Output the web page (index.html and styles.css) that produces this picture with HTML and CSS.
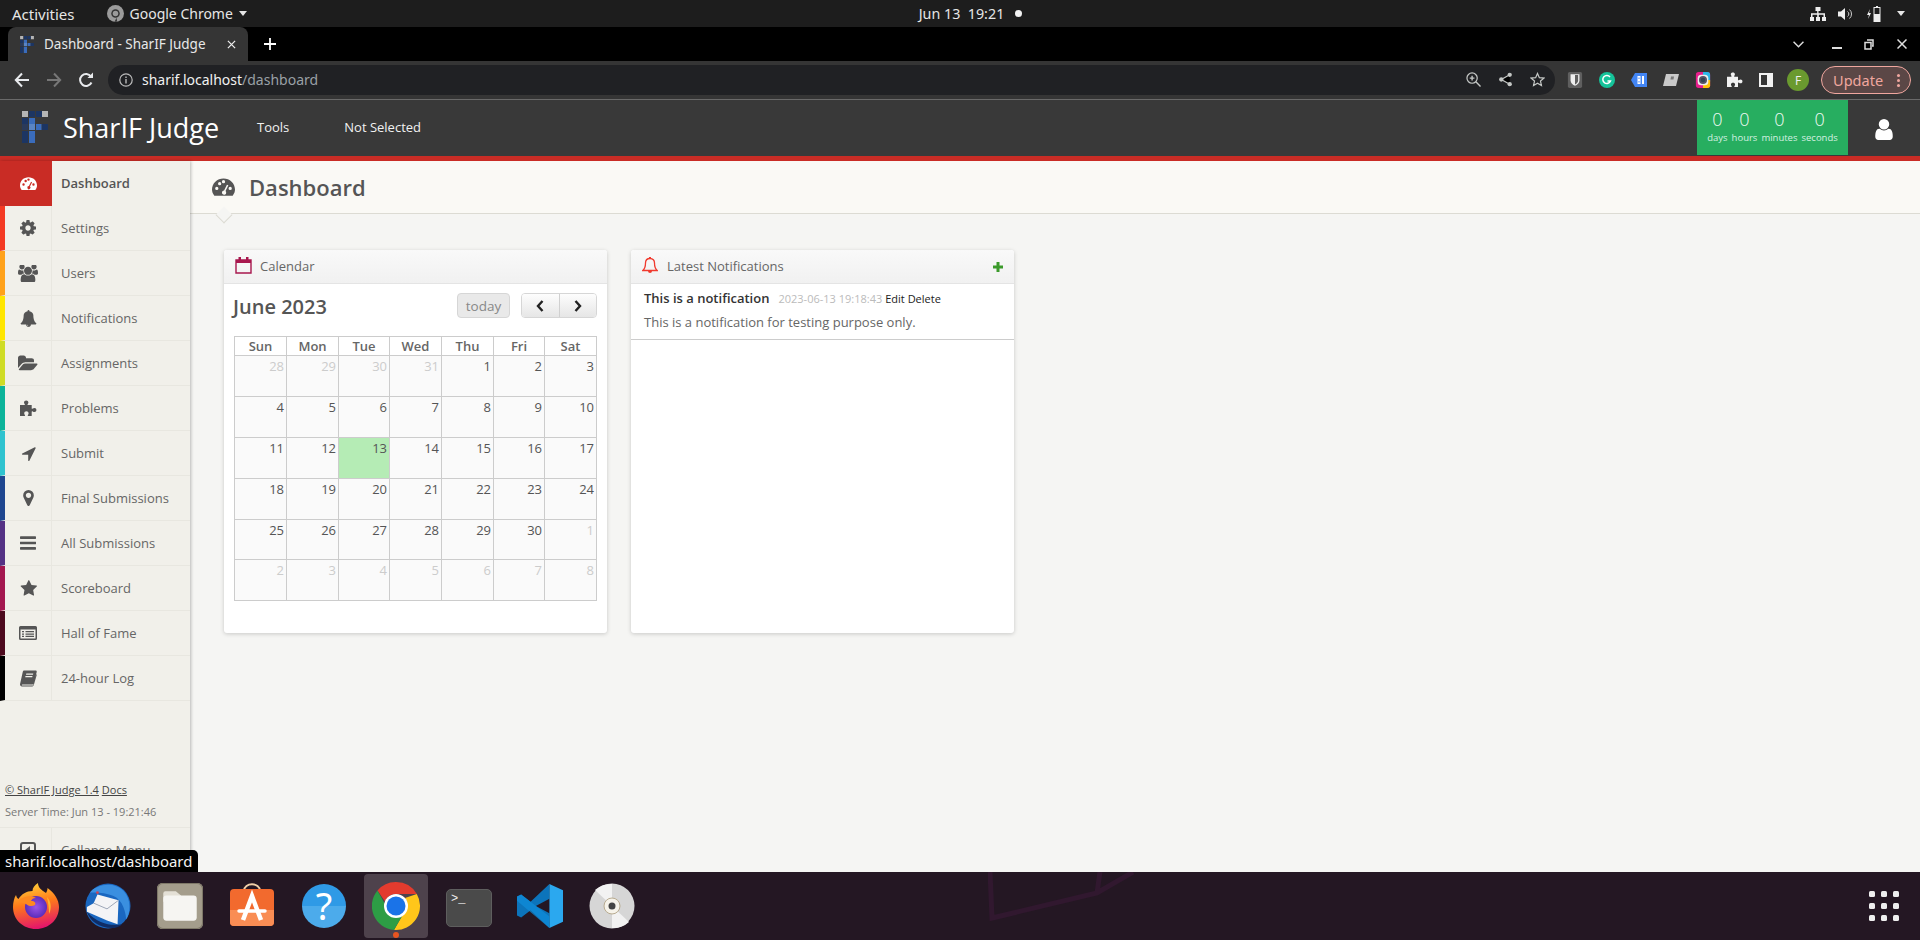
FILE: index.html
```html
<!DOCTYPE html>
<html lang="en">
<head>
<meta charset="utf-8">
<title>Dashboard - SharIF Judge</title>
<link rel="stylesheet" href="styles.css">
</head>
<body>
<svg class="defs" width="0" height="0" aria-hidden="true">
  <symbol id="i-dash" viewBox="0 0 24 18"><path fill="currentColor" fill-rule="evenodd" d="M2.4 18C.8 16 0 14 0 11.7 0 5 5.4 0 12 0s12 5 12 11.7c0 2.300-.8 4.300-2.400 6.300zM3.300 10.500a1.700 1.700 0 1 0 3.400 0 1.700 1.700 0 1 0-3.400 0zM6.300 5.500a1.700 1.700 0 1 0 3.400 0 1.700 1.700 0 1 0-3.400 0zM10.300 3.500a1.700 1.700 0 1 0 3.400 0 1.700 1.700 0 1 0-3.400 0zM17.300 10.500a1.700 1.700 0 1 0 3.400 0 1.700 1.700 0 1 0-3.400 0zM15.600 6.700l-3 6a2.200 2.200 0 1 0 1.500.6l3-6.100z"/></symbol>
  <symbol id="i-cog" viewBox="128 128 1536 1536"><path fill="currentColor" d="M1152 896q0-106-75-181t-181-75-181 75-75 181 75 181 181 75 181-75 75-181zm512-109v222q0 12-8 23t-20 13l-185 28q-19 54-39 91 35 50 107 138 10 12 10 25t-9 23q-27 37-99 108t-94 71q-12 0-26-9l-138-108q-44 23-91 38-16 136-29 186-7 28-36 28h-222q-14 0-24.500-8.500t-11.500-21.500l-28-184q-49-16-90-37l-141 107q-10 9-25 9-14 0-25-11-126-114-165-168-7-10-7-23 0-12 8-23 15-21 51-66.500t54-70.500q-27-50-41-99l-183-27q-13-2-21-12.500t-8-23.500v-222q0-12 8-23t19-13l186-28q14-46 39-92-40-57-107-138-10-12-10-24 0-10 9-23 26-36 98.500-107.500t94.500-71.500q13 0 26 10l138 107q44-23 91-38 16-136 29-186 7-28 36-28h222q14 0 24.500 8.500t11.500 21.500l28 184q49 16 90 37l142-107q9-9 24-9 13 0 25 10 129 119 165 170 7 8 7 22 0 12-8 23-15 21-51 66.500t-54 70.500q26 50 41 98l183 28q13 2 21 12.500t8 23.500z"/></symbol>
  <symbol id="i-users" viewBox="0 128 1920 1536"><path fill="currentColor" d="M593 896q-162 5-265 128h-134q-82 0-138-40.500t-56-118.500q0-353 124-353 6 0 43.500 21t97.500 42.500 119 21.500q67 0 133-23-5 37-5 66 0 139 81 256zm1071 637q0 120-73 189.500t-194 69.500h-874q-121 0-194-69.500t-73-189.500q0-53 3.500-103.500t14-109 26.500-108.500 43-97.500 62-81 85.500-53.500 111.500-20q10 0 43 21.500t73 48 107 48 135 21.500 135-21.500 107-48 73-48 43-21.500q61 0 111.500 20t85.500 53.500 62 81 43 97.500 26.500 108.500 14 109 3.500 103.500zm-1024-1277q0 106-75 181t-181 75-181-75-75-181 75-181 181-75 181 75 75 181zm704 384q0 159-112.500 271.500t-271.500 112.500-271.500-112.500-112.500-271.500 112.500-271.500 271.500-112.500 271.500 112.500 112.500 271.500zm576 225q0 78-56 118.500t-138 40.500h-134q-103-123-265-128 81-117 81-256 0-29-5-66 66 23 133 23 59 0 119-21.500t97.500-42.500 43.500-21q124 0 124 353zm-128-609q0 106-75 181t-181 75-181-75-75-181 75-181 181-75 181 75 75 181z"/></symbol>
  <symbol id="i-bell" viewBox="0 0 1792 1792"><path fill="currentColor" d="M912 1696q0-16-16-16-59 0-101.500-42.500t-42.500-101.500q0-16-16-16t-16 16q0 73 51.500 124.500t124.500 51.500q16 0 16-16zm816-288q0 52-38 90t-90 38h-448q0 106-75 181t-181 75-181-75-75-181h-448q-52 0-90-38t-38-90q50-42 91-88t85-119.500 74.500-158.500 50-206 19.500-260q0-152 117-282.500t307-158.500q-8-19-8-39 0-40 28-68t68-28 68 28 28 68q0 20-8 39 190 28 307 158.500t117 282.500q0 139 19.500 260t50 206 74.500 158.500 85 119.500 91 88z"/></symbol>
  <symbol id="i-folder" viewBox="0 128 1920 1536"><path fill="currentColor" d="M1879 952q0 31-31 66l-336 396q-43 51-120.500 86.500t-143.500 35.500h-1088q-34 0-60.500-13t-26.500-43q0-31 31-66l336-396q43-51 120.500-86.500t143.500-35.500h1088q34 0 60.500 13t26.500 43zm-343-344v160h-832q-94 0-197 47.500t-164 119.500l-337 396-5 6q0-4-.5-12.500t-.5-12.500v-960q0-92 66-158t158-66h320q92 0 158 66t66 158v32h544q92 0 158 66t66 158z"/></symbol>
  <symbol id="i-puzzle" viewBox="0 0 17 17"><path fill="currentColor" d="M0 5h4.300c.7 0 .7-.6.300-1C4.200 3.500 4 3 4 2.500 4 1.200 5 .5 6.200.5s2.200.7 2.200 2c0 .5-.2 1-.6 1.500-.4.400-.4 1 .3 1h3.600v3.300c0 .7.600.7 1.100.3.500-.4 1-.6 1.600-.6 1.300 0 2 .8 2 2s-.7 2-2 2c-.6 0-1.100-.2-1.600-.6-.5-.4-1.100-.4-1.100.3V16H8.300c-.7 0-.7-.6-.3-1.100.4-.5.600-1 .6-1.600 0-1.300-1-2-2.200-2s-2.200.7-2.200 2c0 .6.200 1.100.6 1.600.4.500.4 1.100-.3 1.100H0z"/></symbol>
  <symbol id="i-arrow" viewBox="128 128 1472 1536"><path fill="currentColor" d="M1593 349l-640 1280q-17 35-57 35-5 0-15-2-22-5-35.500-22.500t-13.500-39.500v-576h-576q-22 0-39.500-13.500t-22.500-35.500 4-42 29-30l1280-640q13-7 29-7 27 0 45 19 15 14 18.500 34.500t-6.500 39.500z"/></symbol>
  <symbol id="i-marker" viewBox="0 128 1024 1536"><path fill="currentColor" d="M768 640q0-106-75-181t-181-75-181 75-75 181 75 181 181 75 181-75 75-181zm256 0q0 109-33 179l-364 774q-16 33-47.500 52t-67.500 19-67.500-19-46.500-52l-365-774q-33-70-33-179 0-212 150-362t362-150 362 150 150 362z"/></symbol>
  <symbol id="i-bars" viewBox="128 256 1536 1280"><path fill="currentColor" d="M1664 1344v128q0 26-19 45t-45 19h-1408q-26 0-45-19t-19-45v-128q0-26 19-45t45-19h1408q26 0 45 19t19 45zm0-512v128q0 26-19 45t-45 19h-1408q-26 0-45-19t-19-45v-128q0-26 19-45t45-19h1408q26 0 45 19t19 45zm0-512v128q0 26-19 45t-45 19h-1408q-26 0-45-19t-19-45v-128q0-26 19-45t45-19h1408q26 0 45 19t19 45z"/></symbol>
  <symbol id="i-star" viewBox="0 64 1728 1664"><path fill="currentColor" d="M1728 647q0 22-26 48l-363 354 86 500q1 7 1 20 0 21-10.500 35.500t-30.500 14.500q-19 0-40-12l-449-236-449 236q-22 12-40 12-21 0-31.500-14.500t-10.500-35.500q0-6 2-20l86-500-364-354q-25-27-25-48 0-37 56-46l502-73 225-455q19-41 49-41t49 41l225 455 502 73q56 9 56 46z"/></symbol>
  <symbol id="i-list" viewBox="0 0 18 14"><path fill="currentColor" fill-rule="evenodd" d="M1.500 0h15A1.500 1.500 0 0 1 18 1.500v11a1.500 1.500 0 0 1-1.500 1.500h-15A1.500 1.500 0 0 1 0 12.500v-11A1.500 1.500 0 0 1 1.500 0zM1.500 3.500v8.700c0 .2.100.3.300.3h14.400c.2 0 .3-.1.300-.3V3.500zM3 5h2v1.300H3zM6.500 5H15v1.300H6.500zM3 7.400h2v1.300H3zM6.500 7.400H15v1.300H6.500zM3 9.800h2v1.300H3zM6.500 9.800H15v1.300H6.500z"/></symbol>
  <symbol id="i-book" viewBox="0 0 17 16"><path fill="currentColor" fill-rule="evenodd" d="M4 0h11.500c1 0 1.500.7 1.200 1.600l-2.900 11c-.3 1-1.100 1.500-2 1.500H2.800c-.7 0-1.200.4-1 .9h10.500c.5 0 .8-.2.900-.6L16.200 3.700l.6.500-3 10.300c-.2.900-1 1.500-2 1.500H2C.7 16 0 15 0 13.800L2.800 1.200C3 .5 3.400 0 4 0zM6.300 3l-.3 1.200h7l.3-1.200zM5.500 5.600l-.3 1.200h7l.3-1.200z"/></symbol>
  <symbol id="i-user" viewBox="256 128 1280 1536"><path fill="currentColor" d="M1536 1399q0 109-62.500 187t-150.500 78h-854q-88 0-150.500-78t-62.500-187q0-85 8.500-160.500t31.500-152 58.500-131 94-89 134.500-34.500q131 128 313 128t313-128q76 0 134.500 34.500t94 89 58.500 131 31.500 152 8.500 160.500zm-256-887q0 159-112.500 271.500t-271.500 112.500-271.500-112.500-112.500-271.500 112.500-271.500 271.500-112.500 271.500 112.500 112.500 271.500z"/></symbol>
  <symbol id="i-logo" viewBox="0 0 26 32">
    <path fill="#b5b5b5" d="M0 0h6v6H0zM20 0h6v6h-6z"/>
    <path fill="#1c3563" d="M7 0h6v6H7zM14 0h6v6h-6zM0 7h6v6H0zM0 20h6v6H0zM0 26h6v6H0zM20 13h6v6h-6z"/>
    <path fill="#2a3a5a" d="M0 13h6v6H0z"/>
    <path fill="#3a6cbc" d="M7 7h6v6H7zM14 13h5.500v6H14zM7 20h6v12H7z"/>
    <path fill="#5a85c5" d="M7 13h6v6H7z"/>
  </symbol>
</svg>

<div class="panel">
  <div class="panel-left">
    <span class="activities">Activities</span>
    <span class="panel-app">
      <svg class="panel-chrome" viewBox="0 0 16 16"><circle cx="8" cy="8" r="8" fill="#9b9b9b"/><circle cx="8" cy="8" r="4" fill="#333"/><circle cx="8" cy="8" r="2.600" fill="#9b9b9b"/><path d="M9 12l-2 4 2.500-.5z" fill="#333"/></svg>
      Google Chrome
      <i class="caret"></i>
    </span>
  </div>
  <div class="panel-clock">Jun 13&nbsp; 19:21 <i class="rec"></i></div>
  <div class="panel-right">
    <svg class="tray-a" viewBox="0 0 16 14"><path fill="#eee" d="M5.500 0h5v4h-2v2.200H15V10h1v4h-4v-4h1.500V7.800h-4.700V10H10v4H6v-4h1.200V7.800H2.500V10H4v4H0v-4h1V6.200h6.200V4H5.500z"/></svg>
    <svg class="tray-b" viewBox="0 0 15 14"><path fill="#eee" d="M0 4.500h3L7 1v12L3 9.500H0z"/><path fill="none" stroke="#ccc" d="M9.500 4.500a3 3 0 0 1 0 5M11.500 2.500a6 6 0 0 1 0 9"/></svg>
    <svg class="tray-c" viewBox="0 0 15 16"><path fill="#eee" d="M3 3 0 9h2l-1 4 3-6H2zM9 0h2v1h2.500v15h-7V1H9z"/><path fill="#1d1d1d" d="M7.500 2h5v6h-5z"/></svg>
    <i class="caret"></i>
  </div>
</div>

<div class="tabstrip">
  <div class="tab">
    <svg class="tab-logo" viewBox="0 0 26 32"><use href="#i-logo"/></svg>
    <span class="tab-title">Dashboard - SharIF Judge</span>
    <svg class="tab-close" viewBox="0 0 10 10"><path stroke="#eee" stroke-width="1.400" d="M1 1l8 8M9 1l-8 8"/></svg>
  </div>
  <svg class="tab-new" viewBox="0 0 12 12"><path stroke="#fff" stroke-width="1.800" d="M6 0v12M0 6h12"/></svg>
  <div class="win-btns">
    <svg class="win-chev" viewBox="0 0 10 6"><path fill="none" stroke="#ddd" stroke-width="1.300" d="M.5.500 5 5 9.500.5"/></svg>
    <span class="win-min"></span>
    <svg class="win-rest" viewBox="0 0 10 11"><path fill="none" stroke="#ddd" stroke-width="1.500" d="M3 1h6v6H8M1 3.500h6v6.500H1z"/></svg>
    <svg class="win-x" viewBox="0 0 10 10"><path stroke="#ddd" stroke-width="1.500" d="M.5.500l9 9M9.500.5l-9 9"/></svg>
  </div>
</div>

<div class="toolbar">
  <svg class="nav" viewBox="0 0 16 16"><path fill="none" stroke="#e8eaed" stroke-width="2" d="M15 8H2M8 1.500 1.800 8 8 14.500"/></svg>
  <svg class="nav" viewBox="0 0 16 16"><path fill="none" stroke="#777" stroke-width="2" d="M1 8h13M8 1.500 14.200 8 8 14.500"/></svg>
  <svg class="nav" viewBox="0 0 16 16"><path fill="none" stroke="#e8eaed" stroke-width="2" d="M13.500 10.500A6 6 0 1 1 13 4.500"/><path fill="#e8eaed" d="M9.500 6H15V.5z"/></svg>
  <div class="omnibox">
    <svg class="omni-info" viewBox="0 0 14 14"><circle cx="7" cy="7" r="6.200" fill="none" stroke="#bbb" stroke-width="1.200"/><path fill="#bbb" d="M6.300 6h1.400v4.500H6.300zM6.300 3.500h1.400v1.400H6.300z"/></svg>
    <span class="url"><b>sharif.localhost</b>/dashboard</span>
    <svg class="omni-act" viewBox="0 0 16 16"><circle cx="6.500" cy="6.500" r="5.500" fill="none" stroke="#c4c7c5" stroke-width="1.300"/><path stroke="#c4c7c5" stroke-width="1.500" d="m10.500 10.500 5 5M4 6.500h5M6.500 4v5"/></svg>
    <svg class="omni-act" viewBox="0 0 16 16"><path stroke="#c4c7c5" stroke-width="1.300" d="M12.500 3 3.500 8l9 5"/><circle cx="12.500" cy="3" r="2.300" fill="#c4c7c5"/><circle cx="3.500" cy="8" r="2.300" fill="#c4c7c5"/><circle cx="12.500" cy="13" r="2.300" fill="#c4c7c5"/></svg>
    <svg class="omni-act" viewBox="0 0 16 16"><path fill="none" stroke="#c4c7c5" stroke-width="1.300" d="m8 1.500 2 4.500 4.800.5-3.600 3.200 1 4.800L8 12l-4.200 2.500 1-4.800L1.200 6.500 6 6z"/></svg>
  </div>
  <div class="exts">
    <svg class="ext" viewBox="0 0 16 18"><rect width="16" height="18" rx="2" fill="#5f5f5f"/><path fill="#eee" d="M3 2.500h10v7c0 3-2.500 5-5 6-2.500-1-5-3-5-6z"/><path fill="#5f5f5f" d="M8 3.500h3.500v6c0 2-1.500 3.500-3.500 4.500z"/></svg>
    <svg class="ext" viewBox="0 0 16 16"><circle cx="8" cy="8" r="8" fill="#15c39a"/><path fill="none" stroke="#fff" stroke-width="1.500" d="M11 5a4 4 0 1 0 .5 4H8.500"/></svg>
    <svg class="ext" viewBox="0 0 16 14"><path fill="#4285f4" d="M4 0h12v14H4L0 7z"/><path fill="#fff" d="M6.500 3h3v8h-3zM11 3h2v8h-2z"/><path fill="#4285f4" d="M7.500 4.500h1v1.500h-1zM7.500 8h1v1.500h-1z"/></svg>
    <svg class="ext" viewBox="0 0 16 14"><path fill="#c9c9c9" d="M3 1h13l-3 12H0z"/><path fill="#777" d="M8 3.500h3l-.5 3h-3z"/></svg>
    <svg class="ext" viewBox="0 0 16 18"><rect width="16" height="18" rx="3" fill="#e91e8c"/><path fill="#2bb6e8" d="M8 0h5a3 3 0 0 1 3 3v8H8z"/><path fill="#ffc107" d="M8 9h8v6a3 3 0 0 1-3 3H8z"/><rect x="2" y="3" width="12" height="12" rx="4" fill="#eee"/><circle cx="8" cy="9" r="4.500" fill="#556"/><circle cx="8" cy="9" r="2.500" fill="#345"/></svg>
    <svg class="ext ext-puz"><use href="#i-puzzle"/></svg>
    <svg class="ext ext-side" viewBox="0 0 14 14"><path fill="#f1f1f1" fill-rule="evenodd" d="M0 0h14v14H0zM2 2v10h6V2z"/></svg>
    <span class="avatar">F</span>
  </div>
  <div class="update"><span>Update</span><i class="dots"></i></div>
</div>

<header class="app-header">
  <svg class="logo" viewBox="0 0 26 32"><use href="#i-logo"/></svg>
  <span class="brand">SharIF Judge</span>
  <nav class="top-nav"><a>Tools</a><a>Not Selected</a></nav>
  <div class="timer">
    <div class="t-cell"><b>0</b><span>days</span></div>
    <div class="t-cell"><b>0</b><span>hours</span></div>
    <div class="t-cell"><b>0</b><span>minutes</span></div>
    <div class="t-cell"><b>0</b><span>seconds</span></div>
  </div>
  <svg class="user-ico"><use href="#i-user"/></svg>
</header>

<div class="app-main">
  <aside class="sidebar">
    <ul class="menu">
      <li class="item active"><span class="ico"><svg class="w17"><use href="#i-dash"/></svg></span><span class="lbl">Dashboard</span></li>
      <li class="item c1"><span class="ico"><svg class="w16"><use href="#i-cog"/></svg></span><span class="lbl">Settings</span></li>
      <li class="item c2"><span class="ico"><svg class="w19"><use href="#i-users"/></svg></span><span class="lbl">Users</span></li>
      <li class="item c3"><span class="ico"><svg class="w17"><use href="#i-bell"/></svg></span><span class="lbl">Notifications</span></li>
      <li class="item c4"><span class="ico"><svg class="w19"><use href="#i-folder"/></svg></span><span class="lbl">Assignments</span></li>
      <li class="item c5"><span class="ico"><svg class="w17"><use href="#i-puzzle"/></svg></span><span class="lbl">Problems</span></li>
      <li class="item c6"><span class="ico"><svg class="w14"><use href="#i-arrow"/></svg></span><span class="lbl">Submit</span></li>
      <li class="item c7"><span class="ico"><svg class="w15"><use href="#i-marker"/></svg></span><span class="lbl">Final Submissions</span></li>
      <li class="item c8"><span class="ico"><svg class="w16"><use href="#i-bars"/></svg></span><span class="lbl">All Submissions</span></li>
      <li class="item c9"><span class="ico"><svg class="w17"><use href="#i-star"/></svg></span><span class="lbl">Scoreboard</span></li>
      <li class="item c10"><span class="ico"><svg class="w18"><use href="#i-list"/></svg></span><span class="lbl">Hall of Fame</span></li>
      <li class="item c11"><span class="ico"><svg class="w17"><use href="#i-book"/></svg></span><span class="lbl">24-hour Log</span></li>
    </ul>
    <div class="side-foot">
      <p class="foot-links"><a>© SharIF Judge 1.4</a> <a>Docs</a></p>
      <p class="foot-time">Server Time: Jun 13 - 19:21:46</p>
    </div>
    <div class="collapse">
      <span class="ico"><svg class="col-ico" viewBox="0 0 16 16"><rect x="1" y="1" width="14" height="14" rx="2" fill="none" stroke="#555" stroke-width="2"/><path fill="#555" d="M10 4v8L5 8z"/></svg></span><span class="lbl">Collapse Menu</span>
    </div>
  </aside>

  <main class="content">
    <div class="page-head">
      <svg class="head-ico"><use href="#i-dash"/></svg>
      <h1>Dashboard</h1>
      <i class="notch"></i>
    </div>
    <div class="cards">
      <section class="card">
        <div class="card-head">
          <svg class="cal-ico" viewBox="0 0 17 17"><path fill="none" stroke="#a8174e" stroke-width="1.400" d="M1 3h15v13H1z"/><path fill="#a8174e" d="M1 3h15v3H1zM3.500 0H6v4H3.500zM11 0h2.500v4H11z"/></svg>
          <span>Calendar</span>
        </div>
        <div class="cal">
          <div class="cal-top">
            <h2>June 2023</h2>
            <button class="today" type="button">today</button>
            <div class="pager">
              <button type="button"><svg viewBox="0 0 8 12"><path fill="none" stroke="#222" stroke-width="2.400" d="M6.500 1 2 6l4.500 5"/></svg></button>
              <button type="button"><svg viewBox="0 0 8 12"><path fill="none" stroke="#222" stroke-width="2.400" d="M1.500 1 6 6l-4.500 5"/></svg></button>
            </div>
          </div>
          <table class="grid">
            <thead><tr><th>Sun</th><th>Mon</th><th>Tue</th><th>Wed</th><th>Thu</th><th>Fri</th><th>Sat</th></tr></thead>
            <tbody>
              <tr><td class="off">28</td><td class="off">29</td><td class="off">30</td><td class="off">31</td><td>1</td><td>2</td><td>3</td></tr>
              <tr><td>4</td><td>5</td><td>6</td><td>7</td><td>8</td><td>9</td><td>10</td></tr>
              <tr><td>11</td><td>12</td><td class="now">13</td><td>14</td><td>15</td><td>16</td><td>17</td></tr>
              <tr><td>18</td><td>19</td><td>20</td><td>21</td><td>22</td><td>23</td><td>24</td></tr>
              <tr><td>25</td><td>26</td><td>27</td><td>28</td><td>29</td><td>30</td><td class="off">1</td></tr>
              <tr><td class="off">2</td><td class="off">3</td><td class="off">4</td><td class="off">5</td><td class="off">6</td><td class="off">7</td><td class="off">8</td></tr>
            </tbody>
          </table>
        </div>
      </section>
      <section class="card">
        <div class="card-head">
          <svg class="bell-ico" viewBox="0 0 16 17"><path fill="none" stroke="#f03a2e" stroke-width="1.300" d="M8 1.500c-3 0-4.500 2-4.500 4.500 0 4-1 6-2.700 7.500h14.400C13.500 12 12.500 10 12.500 6c0-2.500-1.500-4.500-4.500-4.500z"/><path fill="#f03a2e" d="M7 0h2v2H7zM6 14h4a2 2 0 0 1-4 0z"/></svg>
          <span>Latest Notifications</span>
          <svg class="plus-ico" viewBox="0 0 10 10"><path stroke="#3b9a2b" stroke-width="3" d="M5 0v10M0 5h10"/></svg>
        </div>
        <div class="note">
          <div class="note-top"><strong>This is a notification</strong><small>2023-06-13 19:18:43</small><span><a>Edit</a> <a>Delete</a></span></div>
          <p>This is a notification for testing purpose only.</p>
        </div>
      </section>
    </div>
  </main>
</div>

<div class="status-tip">sharif.localhost/dashboard</div>

<footer class="dock">
  <svg class="wall" viewBox="0 0 160 50"><path fill="none" stroke="#31182f" stroke-width="5" d="M2 0l2 46 105-25L145 0M109 21l3-21"/></svg>
  <span class="dock-item">
    <svg viewBox="0 0 46 46"><defs><linearGradient id="ff" x1=".3" y1="0" x2=".5" y2="1"><stop offset="0" stop-color="#ffd23a"/><stop offset=".45" stop-color="#ff7a1a"/><stop offset="1" stop-color="#e3136c"/></linearGradient><radialGradient id="ffc"><stop offset="0" stop-color="#9a55e8"/><stop offset="1" stop-color="#5b2dbb"/></radialGradient></defs><path fill="url(#ff)" d="M25 0c0 4 3 7 8 10 1-2 1.500-3 1.500-5 7 5 11.500 12 11.500 19 0 12.500-10 22-23 22S0 36.500 0 24c0-4 1-9 3-12 .5 2 1 3 2.500 4 3-5 8-8 14-8 0-3 2-6 5.500-8z"/><circle cx="23" cy="24" r="11" fill="url(#ffc)"/><path fill="#ff8a1f" d="M6 17c5-4 13-5 17-2-3 0-4 1-5 3 4 0 5 2 4 4-3 2-7 1-9-1-3-1-6-2-7-4z"/><path fill="#ffb52e" d="M34 14c4 4 5 11 2 17 0-6-1-12-2-17z"/></svg>
  </span>
  <span class="dock-item">
    <svg viewBox="0 0 48 48"><circle cx="24" cy="24" r="23.500" fill="#1a67c0"/><path fill="#3a8fe0" d="M5 10C12 1 30-2 40 8c8 8 8 22 3 30-1-12-6-24-18-26C18 10 11 10 5 10z"/><path fill="#0f2d66" d="M2 30c3 10 14 18 29 17 3-1 6-2 8-4-12 2-25 0-37-13z"/><path fill="#f4f4f6" d="M2 25 9 21l4-9 22 6-1 25-11-4-21-9z"/><path fill="none" stroke="#9aa3b5" d="m9 21 14 6 12-9"/><circle cx="13" cy="10" r="1.500" fill="#c45"/></svg>
  </span>
  <span class="dock-item">
    <svg viewBox="0 0 44 44"><rect width="44" height="44" rx="5" fill="#a49d8c"/><rect x=".5" y=".5" width="43" height="43" rx="5" fill="none" stroke="#7e7868"/><path fill="#e4e0d6" d="M6 10a2 2 0 0 1 2-2h10l5 4v6H6z"/><rect x="6" y="12" width="32" height="24" rx="3" fill="#f6f5f2"/></svg>
  </span>
  <span class="dock-item">
    <svg viewBox="0 0 44 46"><path fill="none" stroke="#f0d0a8" stroke-width="2" d="M14 8C14-1 30-1 30 8"/><rect y="6" width="44" height="37" rx="4" fill="#f26a2e"/><path fill="#f98d54" d="M0 27h44v12a4 4 0 0 1-4 4H4a4 4 0 0 1-4-4z"/><path fill="none" stroke="#fff" stroke-width="4.500" d="M13 37 22 13l9 24"/><path stroke="#fff" stroke-width="3.500" stroke-linecap="round" d="M9 28h26"/></svg>
  </span>
  <span class="dock-item help">?</span>
  <span class="dock-item dock-active">
    <svg viewBox="0 0 48 48"><path fill="#e33b2e" d="M24 0a24 24 0 0 1 20.800 12H24a12 12 0 0 0-11 7.500L5.500 8.500A24 24 0 0 1 24 0z"/><path fill="#ffc61a" d="M44.800 12A24 24 0 0 1 22 47.900l9.500-16.400A12 12 0 0 0 33 16z"/><path fill="#2d9d45" d="M5.500 8.500 14 24a12 12 0 0 0 17.500 7.500L22 47.900A24 24 0 0 1 5.500 8.500z"/><circle cx="24" cy="24" r="12" fill="#fff"/><circle cx="24" cy="24" r="9.500" fill="#1a73e8"/></svg>
    <i class="dock-dot"></i>
  </span>
  <span class="dock-item term"><b>&gt;_</b></span>
  <span class="dock-item">
    <svg viewBox="0 0 44 42"><path fill="#0c74bb" d="M31 0 13 17 4 10 0 12v18l4 2 9-7 18 17V28L18 21 31 14z"/><path fill="#2ba8ef" d="M31 0l13 6v30l-13 6z"/><path fill="#108fdc" d="M0 12 4 10 31 31v11L0 16z" opacity=".7"/></svg>
  </span>
  <span class="dock-item">
    <svg viewBox="0 0 46 46"><circle cx="23" cy="23" r="22.500" fill="#d6d6d6"/><path fill="#f2f2f2" d="M23 23 6 7a23 23 0 0 1 17-6zM23 23l17 16a23 23 0 0 1-17 6z"/><circle cx="23" cy="23" r="8" fill="#f6f3ea" stroke="#b8ab90"/><circle cx="23" cy="23" r="3.500" fill="#444"/></svg>
  </span>
  <span class="apps"><i></i><i></i><i></i><i></i><i></i><i></i><i></i><i></i><i></i></span>
</footer>
</body>
</html>
```
FILE: styles.css
```css
* { box-sizing: border-box; }
html, body { margin: 0; height: 100%; }
body {
  width: 1920px; height: 940px; overflow: hidden;
  display: flex; flex-direction: column;
  font-family: "Open Sans", "Noto Sans", sans-serif;
  background: #f5f5f3; color: #555; position: relative;
}
.defs { position: absolute; }
svg { display: block; flex: none; }
i { display: block; }
p, h1, h2, ul { margin: 0; padding: 0; }

/* GNOME panel */
.panel {
  height: 27px; flex: none; background: #1d1d1d; color: #e6e6e6;
  display: grid; grid-template-columns: 1fr auto 1fr; align-items: center;
  font: 14px "Noto Sans", sans-serif; padding: 0 15px 0 12px;
}
.panel-left { display: flex; align-items: center; gap: 32px; }
.activities { font-size: 15px; }
.panel-app { display: flex; align-items: center; gap: 6px; }
.panel-chrome { width: 17px; height: 17px; }
.caret { width: 0; height: 0; border: 4.500px solid transparent; border-top: 5px solid #e6e6e6; border-bottom: 0; }
.panel-clock { display: flex; align-items: center; gap: 8px; font-size: 14.300px; margin-left: 24px; }
.rec { width: 7px; height: 7px; border-radius: 50%; background: #f2f2f2; margin-left: 3px; }
.panel-right { display: flex; justify-content: flex-end; align-items: center; }
.tray-a { width: 16px; height: 14px; }
.tray-b { width: 15px; height: 14px; margin-left: 12px; }
.tray-c { width: 15px; height: 18px; margin-left: 14px; }
.panel-right .caret { margin-left: 15px; }

/* Tab strip */
.tabstrip { height: 34px; flex: none; background: #000; display: flex; align-items: flex-end; padding-left: 8px; }
.tab {
  width: 240px; height: 34px; background: #353535; border-radius: 8px 8px 0 0;
  display: flex; align-items: center; color: #e8e8e8;
  font: 13.500px "Noto Sans", sans-serif; padding: 0 12px;
}
.tab-logo { width: 14px; height: 17px; margin-right: 10px; }
.tab-title { flex: 1; white-space: nowrap; }
.tab-close { width: 9px; height: 9px; }
.tab-new { width: 12px; height: 12px; margin: 0 0 11px 16px; }
.win-btns { margin-left: auto; height: 34px; display: flex; align-items: center; }
.win-chev { width: 11px; height: 7px; margin-right: 28px; }
.win-min { width: 10px; height: 2px; background: #ddd; margin: 8px 22px 0 0; }
.win-rest { width: 10px; height: 11px; margin-right: 23px; }
.win-x { width: 10px; height: 10px; margin-right: 13px; }

/* Toolbar */
.toolbar {
  height: 39px; flex: none; background: #353535; border-bottom: 1px solid #6a6a6a;
  display: flex; align-items: center; padding: 0 9px 0 14px; gap: 16px;
}
.nav { width: 16px; height: 16px; }
.omnibox {
  width: 1467px; height: 30px; margin: -1px 0 0 -2px; background: #202124; border-radius: 15px;
  display: flex; align-items: center; padding: 0 10px 0 11px; color: #9aa0a6;
  font: 14px "Noto Sans", sans-serif;
}
.omni-info { width: 14px; height: 14px; margin-right: 9px; }
.url { flex: 1; }
.url b { font-weight: 400; color: #f1f1f1; }
.omni-act { width: 15px; height: 15px; margin-left: 17px; }
.exts { display: flex; align-items: center; gap: 16px; margin-left: -4px; }
.ext { width: 16px; height: 16px; }
.ext-puz { color: #f1f1f1; }
.ext-side { width: 14px; height: 14px; }
.avatar {
  width: 22px; height: 22px; border-radius: 50%; background: #6a9a2f; color: #eee;
  display: flex; align-items: center; justify-content: center; font-size: 12px; margin-left: -2px;
}
.update {
  width: 91px; height: 28px; border: 1px solid #f0a79f; border-radius: 14px; background: #5b4746;
  color: #f0a79f; font: 14.500px "Noto Sans", sans-serif;
  display: flex; align-items: center; padding-left: 11px; margin-left: -4px;
}
.dots { width: 3px; height: 3px; background: #f0a79f; border-radius: 50%; margin-left: 14px; box-shadow: 0 -5px #f0a79f, 0 5px #f0a79f; }

/* App header */
.app-header {
  height: 61px; flex: none; background: #393939; border-bottom: 5px solid #c92c25;
  display: flex; align-items: center; padding: 0 0 0 22px; color: #fff;
}
.logo { width: 26px; height: 32px; margin-top: -2px; }
.brand { font-size: 27px; margin: -2px 0 0 15px; width: 194px; white-space: nowrap; }
.top-nav { display: flex; gap: 55px; font-size: 13px; color: #f1f1f1; flex: 1; margin-top: -2px; }
.timer {
  width: 151px; height: 55px; background: #27ae60; color: #f0faf4;
  display: flex; justify-content: center; gap: 4px; align-self: flex-start; text-align: center;
  padding: 0 5px;
}
.t-cell { display: flex; flex-direction: column; align-items: center; padding-top: 8px; }
.t-cell b { font-weight: 300; font-size: 18px; line-height: 23px; }
.t-cell span { font-size: 9.500px; line-height: 13px; color: #d5f0e0; }
.user-ico { width: 18px; height: 21px; margin: 2px 27px 0 27px; color: #fff; }

/* Main */
.app-main { flex: 1; display: flex; min-height: 0; }
.sidebar {
  width: 190px; flex: none; background: #f1f0ea; display: flex; flex-direction: column;
  box-shadow: 1px 0 3px rgba(0,0,0,.25); z-index: 1; position: relative;
}
.menu { list-style: none; flex: 1; }
.item {
  height: 45px; display: flex; align-items: stretch;
  border-left: 5px solid #000; border-bottom: 1px solid #e8e7e0;
  font-size: 13px; color: #666;
}
.ico { width: 47px; flex: none; display: flex; align-items: center; justify-content: center; border-right: 1px solid #e8e7e0; color: #555; }
.lbl { padding-left: 9px; display: flex; align-items: center; white-space: nowrap; }
.active { border-left-color: #c92c25; border-bottom: 0; color: #555; font-weight: 600; }
.active .lbl { padding-bottom: 1px; }
.active .ico { background: #c92c25; color: #fff; border-right: 0; padding-bottom: 1px; }
.c1 { border-left-color: #f43a23; } .c2 { border-left-color: #ffa21b; } .c3 { border-left-color: #ffe600; }
.c4 { border-left-color: #cfdc26; } .c5 { border-left-color: #0cb49a; } .c6 { border-left-color: #2fc3cf; }
.c7 { border-left-color: #1f4790; } .c8 { border-left-color: #553285; } .c9 { border-left-color: #a3174f; }
.c10 { border-left-color: #4d0a1e; } .c11 { border-left-color: #000; }
.w14 { width: 15px; height: 15px; } .w15 { width: 11px; height: 16px; } .w16 { width: 16px; height: 16px; }
.w17 { width: 17px; height: 17px; } .w18 { width: 18px; height: 14px; } .w19 { width: 20px; height: 17px; }
.side-foot { padding: 0 5px; font-size: 11px; line-height: 22px; height: 48px; color: #777; }
.foot-links a { color: #444; text-decoration: underline; }
.collapse { height: 45px; flex: none; display: flex; align-items: stretch; border-top: 1px solid #e8e7e0; font-size: 13px; color: #666; padding-left: 5px; }
.col-ico { width: 16px; height: 16px; }

.content { flex: 1; min-width: 0; }
.page-head {
  height: 53px; background: #faf9f5; border-bottom: 1px solid #dcdbd3;
  display: flex; align-items: center; padding-left: 22px; position: relative;
}
.head-ico { width: 23px; height: 18px; color: #555; margin-right: 14px; }
h1 { font-size: 22px; font-weight: 600; color: #555; }
.notch {
  position: absolute; left: 28px; bottom: -8px; width: 12px; height: 12px;
  background: #f5f5f3; border: 1px solid #dcdbd3; border-width: 0 1px 1px 0; transform: rotate(45deg);
}
.cards { display: flex; gap: 24px; padding: 36px 0 0 34px; }
.card {
  width: 383px; height: 383px; background: #fff; border-radius: 3px;
  box-shadow: 0 1px 4px rgba(0,0,0,.18);
}
.card-head {
  height: 34px; background: linear-gradient(#f9f9f9, #f1f1f1); border-bottom: 1px solid #e4e4e4;
  border-radius: 3px 3px 0 0; display: flex; align-items: center; padding: 0 11px; font-size: 13px; color: #666;
}
.card-head span { margin-top: -1px; }
.cal-ico { width: 17px; height: 17px; margin-right: 8px; margin-top: -3px; }
.bell-ico { width: 16px; height: 17px; margin-right: 9px; margin-top: -3px; }
.plus-ico { width: 10px; height: 10px; margin-left: auto; }
.cal { padding: 9px 10px 0; }
.cal-top { height: 43px; display: flex; align-items: flex-start; }
h2 { font-size: 20px; font-weight: 600; color: #555; line-height: 27px; margin: 0 auto 0 -1px; }
.today {
  width: 53px; height: 25px; padding: 0; background: #e9e9e9; border: 1px solid #d6d6d6; border-radius: 4px;
  font: 13.500px "Open Sans", sans-serif; color: #888; margin-right: 11px;
}
.pager { width: 76px; height: 25px; display: flex; border: 1px solid #d6d6d6; border-radius: 4px; overflow: hidden; }
.pager button {
  flex: 1; border: 0; padding: 0; background: linear-gradient(#fdfdfd, #e6e6e6);
  display: flex; align-items: center; justify-content: center;
}
.pager button + button { border-left: 1px solid #d0d0d0; }
.pager svg { width: 8px; height: 12px; }
.grid { width: 363px; border-collapse: collapse; table-layout: fixed; font-size: 13px; }
.grid th { width: 52px; height: 19px; padding: 0; border: 1px solid #ccc; font-weight: 600; color: #666; line-height: 17px; }
.grid th:nth-child(3), .grid th:nth-child(6) { width: 51px; }
.grid th:nth-child(7) { width: auto; }
.grid td {
  height: 40.900px; padding: 1px 2px 0 0; border: 1px solid #ccc; background: #fafafa;
  text-align: right; vertical-align: top; line-height: 18px; color: #555;
}
.grid td.off { color: #ccc; }
.grid td.now { background: #b5ecb5; }
.note { height: 56px; border-bottom: 1px solid #ccc; padding: 5px 13px 0; }
.note-top { font-size: 11px; color: #222; display: flex; align-items: baseline; line-height: 18px; white-space: pre; }
.note-top strong { font-size: 13px; font-weight: 600; color: #333; margin-right: 9px; }
.note-top small { font-size: 11px; color: #bbb; margin-right: 3px; }
.note p { font-size: 13px; color: #666; line-height: 18px; margin-top: 5px; }

/* Status tooltip + dock */
.status-tip {
  position: absolute; left: 0; top: 850px; width: 198px; height: 22px; background: #000; color: #f4f4f4;
  border-radius: 0 5px 0 0; font: 14.900px/22px "Noto Sans", sans-serif; padding-left: 5px; z-index: 3; white-space: nowrap;
}
.dock { height: 68px; flex: none; background: #241723; display: flex; align-items: center; position: relative; z-index: 2; }
.wall { position: absolute; left: 988px; top: 0; width: 160px; height: 50px; }
.dock-item { width: 72px; height: 64px; flex: none; display: flex; align-items: center; justify-content: center; position: relative; }
.dock-item svg { width: 46px; height: 46px; }
.help::before {
  content: ""; position: absolute; left: 14px; top: 10px; width: 44px; height: 44px; border-radius: 50%;
  background: linear-gradient(#2f9ae6 50%, #4cabeb 50%);
}
.help { color: #fff; font: 400 38px "Noto Sans", sans-serif; padding-bottom: 2px; isolation: isolate; }
.help::before { z-index: -1; }
.dock-active { width: 64px; margin: 0 4px; background: #4e424c; border-radius: 4px; }
.dock-active svg { width: 48px; height: 48px; }
.dock-dot { position: absolute; left: 29px; bottom: 0; width: 6px; height: 6px; background: #e95420; border-radius: 50%; }
.term::before {
  content: ""; position: absolute; left: 14px; top: 15px; width: 44px; height: 36px; border-radius: 5px;
  background: #4a4a4a; border: 1px solid #5e5e5e; z-index: -1;
}
.term { isolation: isolate; align-items: flex-start; justify-content: flex-start; color: #eee; font: 400 12px "Liberation Mono", monospace; }
.term b { font-weight: 400; margin: 18px 0 0 19px; }
.apps { margin-left: auto; margin-right: 21px; display: grid; grid-template-columns: repeat(3, 6px); gap: 6px; }
.apps i { width: 6px; height: 6px; background: #efefef; border-radius: 1.500px; }
```
